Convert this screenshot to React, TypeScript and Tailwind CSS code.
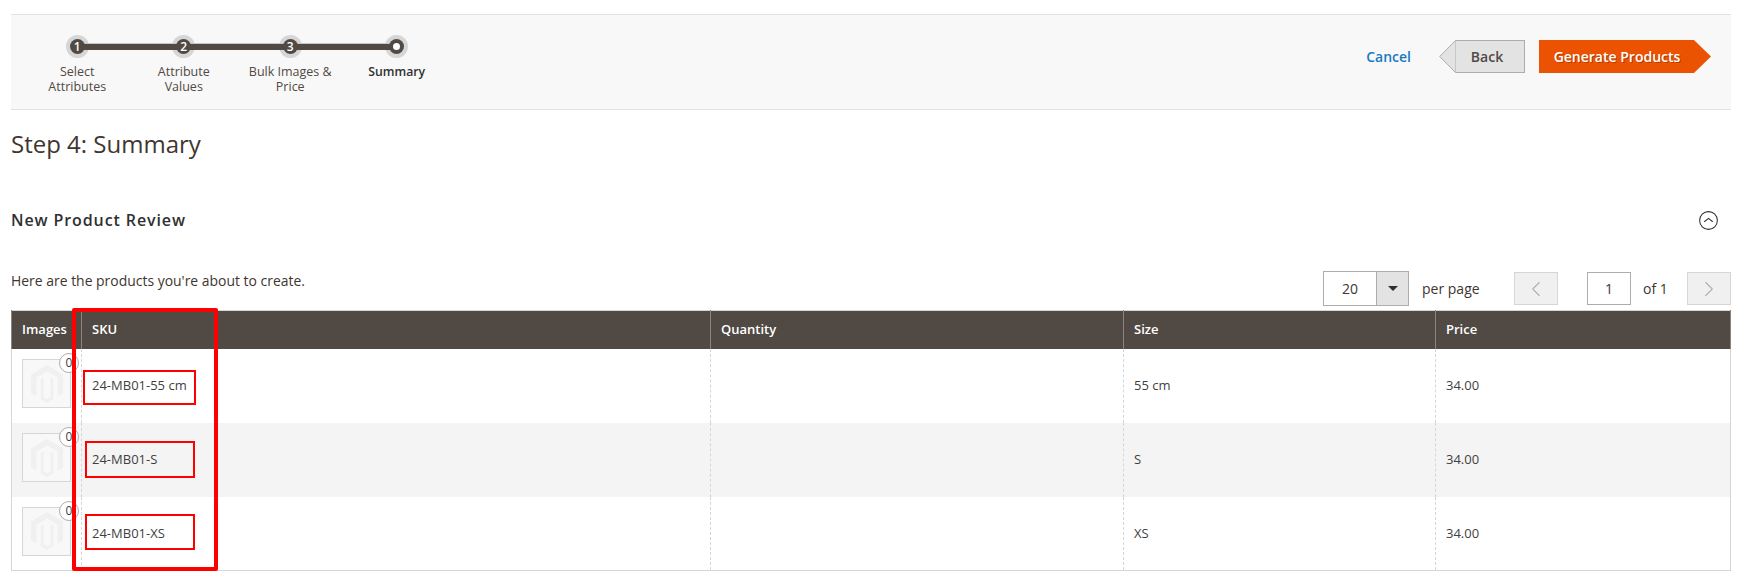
import { ChevronLeft, ChevronRight } from "lucide-react";

const STEPS = [
  { n: "1", label: "Select Attributes" },
  { n: "2", label: "Attribute Values" },
  { n: "3", label: "Bulk Images & Price" },
];

const ROWS = [
  { sku: "24-MB01-55 cm", size: "55 cm", price: "34.00", bg: "bg-white" },
  { sku: "24-MB01-S", size: "S", price: "34.00", bg: "bg-[#f4f4f4]" },
  { sku: "24-MB01-XS", size: "XS", price: "34.00", bg: "bg-white" },
];

function MagentoMark() {
  return (
    <svg viewBox="0 0 32 38" className="h-[38px] w-[32px]">
      <path
        d="M16 0 0 9.5v19l5.5 3.2V12.6L16 6.6l10.5 6v19.1l5.5-3.2v-19zM16 38l-6.4-3.7V13.9l3-1.7v20l3.4 2 3.4-2v-20l3 1.7v20.4z"
        fill="#f0f0f0"
      />
    </svg>
  );
}

export default function App() {
  return (
    <div className="relative min-h-[582px] bg-white pl-[11px] pr-[10px] pt-[14px] font-['Open_Sans',sans-serif] text-[#41362f]">
      <div className="flex h-[96px] items-start justify-between border-y border-[#e3e3e3] bg-[#f8f8f8]">
        <ol className="relative ml-[13px] mt-[20px] flex">
          <div className="absolute left-[53px] right-[53px] top-[8px] z-[5] h-[7px] border-t border-[#c9c6c3] bg-[#514943]" />
          {STEPS.map((s) => (
            <li key={s.n} className="relative flex w-[106.5px] flex-col items-center">
              <span className="flex h-[23px] w-[23px] items-center justify-center rounded-full bg-[#d6d6d6]">
                <span className="relative z-10 flex h-[15px] w-[15px] items-center justify-center rounded-full bg-[#514943] text-[12px] font-semibold leading-none text-white">
                  {s.n}
                </span>
              </span>
              <span className="mt-[6px] w-[88px] text-center text-[12.5px] leading-[15px] text-[#514943]">
                {s.label}
              </span>
            </li>
          ))}
          <li className="relative flex w-[106.5px] flex-col items-center">
            <span className="flex h-[23px] w-[23px] items-center justify-center rounded-full bg-[#d6d6d6]">
              <span className="relative z-10 flex h-[15px] w-[15px] items-center justify-center rounded-full bg-[#514943]">
                <span className="h-[7px] w-[7px] rounded-full bg-white" />
              </span>
            </span>
            <span className="mt-[6px] text-center text-[12.25px] font-semibold leading-[15px] text-[#303030]">
              Summary
            </span>
          </li>
        </ol>

        <div className="mr-[20px] mt-[25px] flex items-center">
          <a className="mr-[28px] text-[14px] font-semibold text-[#1979c3]">Cancel</a>
          <button className="flex h-[33px] items-stretch">
            <svg viewBox="0 0 17 33" className="h-[33px] w-[17px]">
              <path d="M17 .5H16.5L.7 16.5 16.5 32.5H17z" fill="#e3e3e3" stroke="#adadad" />
            </svg>
            <span className="flex w-[69px] items-center justify-center border-y border-r border-[#adadad] bg-[#e3e3e3] pr-[6px] text-[14px] font-semibold text-[#514943]">
              Back
            </span>
          </button>
          <button className="ml-[14px] flex h-[33px] items-stretch">
            <span className="flex w-[155px] items-center justify-center bg-[#eb5202] pl-[1px] text-[14px] font-semibold text-white [text-shadow:1px_1px_0_rgba(0,0,0,0.25)]">
              Generate Products
            </span>
            <svg viewBox="0 0 17 33" className="h-[33px] w-[17px]">
              <path d="M0 0 17 16.5 0 33z" fill="#eb5202" />
            </svg>
          </button>
        </div>
      </div>

      <h1 className="mt-[16px] text-[24px] font-normal leading-[36px] text-[#41362f]">Step 4: Summary</h1>

      <div className="mt-[46px] flex items-center justify-between pr-[13px]">
        <h2 className="text-[16px] font-semibold leading-[24px] tracking-[0.9px] text-[#303030]">New Product Review</h2>
        <svg viewBox="0 0 18 18" className="h-[19px] w-[19px]" fill="none" stroke="#303030">
          <circle cx="9" cy="9" r="8.4" />
          <path d="M5 10.2 9 7l4 3.2" />
        </svg>
      </div>

      <div className="mt-[38px] flex h-[40px] items-start justify-between">
        <p className="mt-[1px] text-[13.95px] leading-[20px] text-[#41362f]">Here are the products you're about to create.</p>
        <div className="mt-[1px] flex items-center text-[14px] text-[#41362f]">
          <div className="flex h-[35px] w-[86px] border border-[#adadad]">
            <span className="flex flex-1 items-center justify-center bg-white">20</span>
            <span className="flex w-[32px] items-center justify-center border-l border-[#adadad] bg-[#e3e3e3]">
              <span className="h-0 w-0 border-x-[5px] border-t-[5px] border-x-transparent border-t-[#303030]" />
            </span>
          </div>
          <span className="ml-[13px] w-[92px]">per page</span>
          <span className="flex h-[33px] w-[44px] items-center justify-center border border-[#d6d6d6] bg-[#f0f0f0] text-[#b0b0b0]">
            <ChevronLeft size={26} strokeWidth={1} />
          </span>
          <span className="ml-[29px] flex h-[33px] w-[44px] items-center justify-center border border-[#adadad] bg-white">1</span>
          <span className="ml-[12px] w-[44px]">of 1</span>
          <span className="flex h-[33px] w-[44px] items-center justify-center border border-[#d6d6d6] bg-[#f0f0f0] text-[#b0b0b0]">
            <ChevronRight size={26} strokeWidth={1} />
          </span>
        </div>
      </div>

      <table className="w-[1720px] table-fixed border-collapse border border-[#d6d6d6] text-[13px] text-[#3f3f3f]">
        <colgroup>
          <col className="w-[70px]" />
          <col className="w-[629px]" />
          <col className="w-[413px]" />
          <col className="w-[312px]" />
          <col />
        </colgroup>
        <thead>
          <tr className="h-[38px] bg-[#514943] text-left text-[13px] font-semibold text-white">
            {["Images", "SKU", "Quantity", "Size", "Price"].map((h) => (
              <th key={h} className="border-x border-[#8a837e] pl-[10px] font-semibold">
                {h}
              </th>
            ))}
          </tr>
        </thead>
        <tbody>
          {ROWS.map((r) => (
            <tr key={r.sku} className={`h-[74px] ${r.bg}`}>
              <td className="border-x border-dashed border-[#d6d6d6] p-0">
                <div className="relative mb-[4px] ml-[10px] flex h-[49px] w-[49px] items-center justify-center border border-[#d6d6d6] bg-[#f8f8f8]">
                  <MagentoMark />
                  <span className="absolute -right-[9px] -top-[7px] flex h-[20px] w-[20px] items-center justify-center rounded-full border border-[#adadad] bg-white text-[12px] leading-none">
                    0
                  </span>
                </div>
              </td>
              <td className="border-x border-dashed border-[#d6d6d6] pl-[10px]">{r.sku}</td>
              <td className="border-x border-dashed border-[#d6d6d6]" />
              <td className="border-x border-dashed border-[#d6d6d6] pl-[10px]">{r.size}</td>
              <td className="border-x border-dashed border-[#d6d6d6] pl-[10px]">{r.price}</td>
            </tr>
          ))}
        </tbody>
      </table>

      {/* annotation boxes drawn over the table */}
      <div className="absolute left-[72px] top-[308px] h-[263px] w-[146px] rounded-[2px] border-[4px] border-[#ff0000]" />
      <div className="absolute left-[83px] top-[370px] h-[35px] w-[113px] border-2 border-[#ff0000]" />
      <div className="absolute left-[85px] top-[441px] h-[37px] w-[110px] border-2 border-[#ff0000]" />
      <div className="absolute left-[85px] top-[514px] h-[36px] w-[110px] border-2 border-[#ff0000]" />
    </div>
  );
}
